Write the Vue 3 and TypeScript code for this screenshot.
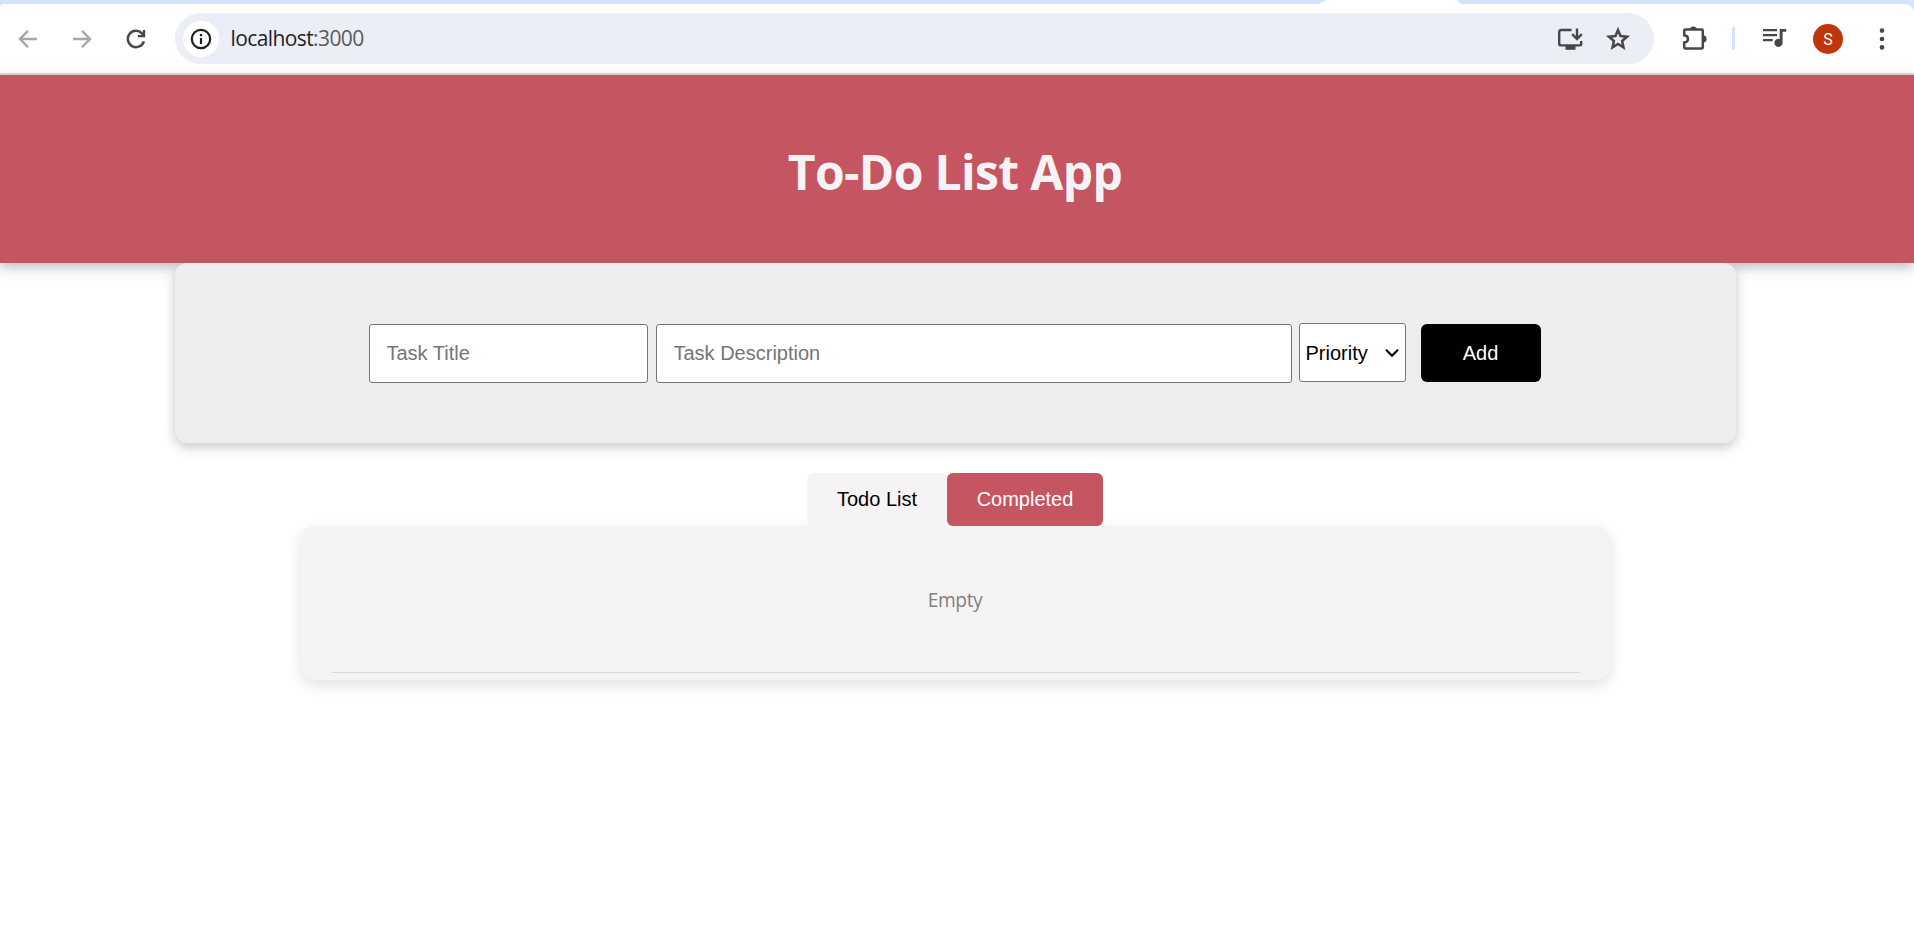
<script setup lang="ts">
import { ref } from 'vue'

const host = 'localhost'
const port = ':3000'
const priorities = ['Priority', 'High', 'Medium', 'Low']
const title = ref('')
const description = ref('')
const priority = ref('Priority')
const tabs = ['Todo List', 'Completed']
const activeTab = ref('Todo List')
</script>

<template>
  <div class="window">
    <div class="tabstrip"><div class="active-tab"></div></div>
    <div class="toolbar-back">
      <div class="toolbar">
        <svg class="icon back" width="20" height="20" viewBox="0 0 20 20">
          <path d="M19 10H2.5M10 1.8 2 10l8 8.2" fill="none" stroke="#a9a9a9" stroke-width="2.5" />
        </svg>
        <svg class="icon forward" width="20" height="20" viewBox="0 0 20 20">
          <path d="M1 10h16.5M10 1.8 18 10l-8 8.2" fill="none" stroke="#a9a9a9" stroke-width="2.5" />
        </svg>
        <svg class="icon reload" width="20" height="20" viewBox="0 0 20 20">
          <path d="M17.9 12.3A8.2 8.2 0 1 1 16 4.3L18 6.4" fill="none" stroke="#474747" stroke-width="2.5" />
          <path d="M19.2 1v7.3h-7.3V5.9h4.9V1z" fill="#474747" />
        </svg>
        <div class="omnibox">
          <div class="site-info">
            <svg width="22" height="22" viewBox="0 0 22 22">
              <circle cx="11" cy="11" r="9.2" fill="none" stroke="#1f1f1f" stroke-width="2.2" />
              <path d="M9.9 10h2.2v6H9.9zM9.9 6h2.2v2.3H9.9z" fill="#1f1f1f" />
            </svg>
          </div>
          <span class="url">{{ host }}<span class="port">{{ port }}</span></span>
          <svg class="install" width="26" height="24" viewBox="0 0 26 24">
            <path d="M14.500 3H4.200Q2.200 3 2.200 5v11.400q0 2 2 2h18q2 0 2-2V14" fill="none" stroke="#474747" stroke-width="2.400" />
            <path d="M8.500 18.500h10v4.300h-10z" fill="#474747" />
            <path d="M20 1.500v10M15.200 7.200l4.800 4.800 4.800-4.800" fill="none" stroke="#474747" stroke-width="2.400" />
          </svg>
          <svg class="star" width="26" height="26" viewBox="0 0 26 26">
            <path d="M13 4.100l2.500 6 6.500.6-4.900 4.300 1.400 6.400-5.500-3.400-5.500 3.400L8.900 15 4 10.700l6.500-.6z" fill="none" stroke="#474747" stroke-width="2.500" />
          </svg>
        </div>
        <svg class="icon puzzle" width="27" height="27" viewBox="0 0 27 27">
          <path d="M4.600 4.500H20.400Q21.800 4.500 21.800 5.900V22Q21.800 23.400 20.400 23.400H4.600Q3.200 23.400 3.200 22V17.600Q7 17 7 13.900T3.200 10.200V5.900Q3.200 4.500 4.600 4.500Z" fill="none" stroke="#474747" stroke-width="2.500" />
          <path d="M8.700 4.200a3.700 3.400 0 0 1 7.200 0zM22.500 10.300a3.700 3.700 0 0 1 0 7.300z" fill="#474747" />
        </svg>
        <div class="separator"></div>
        <svg class="icon music" width="25" height="20" viewBox="0 0 25 20">
          <path d="M1 2.200h14M1 7.200h14M1 12.200h9.700" fill="none" stroke="#474747" stroke-width="2.300" />
          <path d="M17.700 1h6.500v2.700h-3.600V14.800a4.100 4.100 0 1 1-2.900-3.900z" fill="#474747" />
        </svg>
        <div class="avatar">S</div>
        <svg class="icon dots" width="6" height="24" viewBox="0 0 6 24">
          <circle cx="3" cy="3.600" r="2.300" fill="#474747" />
          <circle cx="3" cy="12" r="2.300" fill="#474747" />
          <circle cx="3" cy="20.400" r="2.300" fill="#474747" />
        </svg>
      </div>
    </div>

    <header class="header"><h1>To-Do List App</h1></header>

    <main>
      <form class="task-form" @submit.prevent>
        <input v-model="title" class="task-title" placeholder="Task Title" />
        <input v-model="description" class="task-desc" placeholder="Task Description" />
        <div class="select-wrap">
          <select v-model="priority">
            <option v-for="p in priorities" :key="p">{{ p }}</option>
          </select>
          <svg class="chevron" width="14" height="10" viewBox="0 0 14 10">
            <path d="M1 1.700 7 7.700 13 1.700" fill="none" stroke="#000" stroke-width="2.100" />
          </svg>
        </div>
        <button class="add" type="submit">Add</button>
      </form>

      <div class="tabs">
        <button
          v-for="tab in tabs"
          :key="tab"
          class="tab"
          :class="{ active: tab === activeTab }"
          @click="activeTab = tab"
        >{{ tab }}</button>
      </div>

      <section class="list">
        <p>Empty</p>
        <div class="rule"></div>
      </section>
    </main>
  </div>
</template>

<style>
body {
  margin: 0;
  background: #fff;
}
</style>

<style scoped>
* {
  box-sizing: border-box;
}
.window {
  height: 931px;
  overflow: hidden;
  font-family: 'Open Sans', 'Noto Sans', sans-serif;
}
.tabstrip {
  height: 4px;
  background: #d3e3fd;
}
.active-tab {
  width: 142px;
  height: 4px;
  margin-left: 1319px;
  background: #fff;
  clip-path: polygon(7px 0, 137px 0, 140px 2px, 142px 4px, 0 4px, 4px 2px);
}
.toolbar-back {
  background: #d3e3fd;
}
.toolbar {
  display: flex;
  align-items: center;
  height: 71px;
  background: #fff;
  border-bottom: 2px solid #dcdcdc;
  border-radius: 5px 9px 0 0 / 3px 9px 0 0;
}
.icon {
  flex: none;
}
.back {
  margin-left: 18px;
}
.forward {
  margin-left: 34px;
}
.reload {
  margin-left: 34px;
}
.omnibox {
  display: flex;
  align-items: center;
  flex: none;
  width: 1479px;
  height: 51px;
  margin-left: 29px;
  padding-left: 8px;
  background: #ebeef7;
  border-radius: 26px;
}
.site-info {
  display: flex;
  align-items: center;
  justify-content: center;
  width: 36px;
  height: 36px;
  margin-left: -0.5px;
  border-radius: 50%;
  background: #fff;
}
.url {
  margin-left: 12px;
  padding-bottom: 1px;
  font-size: 21px;
  line-height: 28px;
  letter-spacing: -0.6px;
  color: #1f1f1f;
}
.port {
  color: #5a5a5e;
}
.install {
  margin-left: auto;
}
.star {
  margin: 0 23px 0 22px;
}
.puzzle {
  margin-left: 27px;
  margin-bottom: 1px;
}
.separator {
  flex: none;
  width: 3px;
  height: 23px;
  margin-left: 24px;
  border-radius: 1px;
  background: #d3e3fd;
}
.music {
  margin-left: 27px;
  margin-bottom: 1px;
}
.avatar {
  flex: none;
  width: 30px;
  height: 30px;
  margin-left: 26px;
  border-radius: 50%;
  background: #bf360c;
  color: #fff;
  font: 16px/31px Roboto, sans-serif;
  text-align: center;
}
.dots {
  margin-left: 36px;
}
.header {
  display: flex;
  align-items: center;
  justify-content: center;
  height: 188px;
  background: #c55560;
  box-shadow: 0 4px 12px rgba(120, 120, 120, 0.5);
}
h1 {
  margin: 5px 4px 0 0;
  font-size: 48px;
  line-height: 64px;
  font-weight: 700;
  letter-spacing: -0.65px;
  white-space: nowrap;
  color: #f6f3f5;
}
main {
  display: flex;
  flex-direction: column;
  align-items: center;
  width: 1910px;
}
.task-form {
  position: relative;
  display: flex;
  width: 1561px;
  height: 180px;
  padding: 61px 0 0 194px;
  border-radius: 12px;
  background: #eee;
  box-shadow: 0 4px 12px rgba(143, 143, 143, 0.5);
}
input {
  height: 59px;
  padding: 0 17px;
  border: 1px solid #767676;
  border-radius: 3px;
  background: #fff;
  font: 20px 'Liberation Sans', Arial, sans-serif;
}
input::placeholder {
  color: #757575;
  opacity: 1;
}
.task-title {
  width: 279px;
}
.task-desc {
  width: 636px;
  margin-left: 8px;
}
.select-wrap {
  position: relative;
  width: 107px;
  height: 59px;
  margin: -1px 0 0 7px;
}
select {
  width: 100%;
  height: 100%;
  padding: 0 0 0 6px;
  appearance: none;
  border: 1px solid #767676;
  border-radius: 3px;
  background: #fff;
  color: #000;
  font: 20px 'Liberation Sans', Arial, sans-serif;
}
.chevron {
  position: absolute;
  top: 25px;
  right: 7px;
  pointer-events: none;
}
.add {
  width: 120px;
  height: 58px;
  margin-left: 15px;
  padding: 0;
  border: 0;
  border-radius: 6px;
  background: #000;
  color: #fff;
  font: 20px 'Liberation Sans', Arial, sans-serif;
}
.tabs {
  position: relative;
  z-index: 1;
  display: flex;
  width: 296px;
  margin-top: 30px;
}
.tab {
  flex: none;
  width: 156px;
  height: 53px;
  padding: 0;
  border: 0;
  border-radius: 6px;
  background: #c55560;
  color: #fff;
  font: 20px 'Liberation Sans', Arial, sans-serif;
}
.tab.active {
  width: 140px;
  background: #f5f3f4;
  color: #000;
}
.list {
  width: 1309px;
  height: 154px;
  padding: 60px 30px 0;
  border-radius: 14px;
  background: #f5f3f4;
  box-shadow: 0 5px 15px rgba(0, 0, 0, 0.12);
  text-align: center;
}
.list p {
  margin: 0 0 58px;
  font-size: 19.200px;
  line-height: 28px;
  letter-spacing: -0.4px;
  color: #808080;
}
.rule {
  height: 1px;
  background: #dadada;
}
</style>
